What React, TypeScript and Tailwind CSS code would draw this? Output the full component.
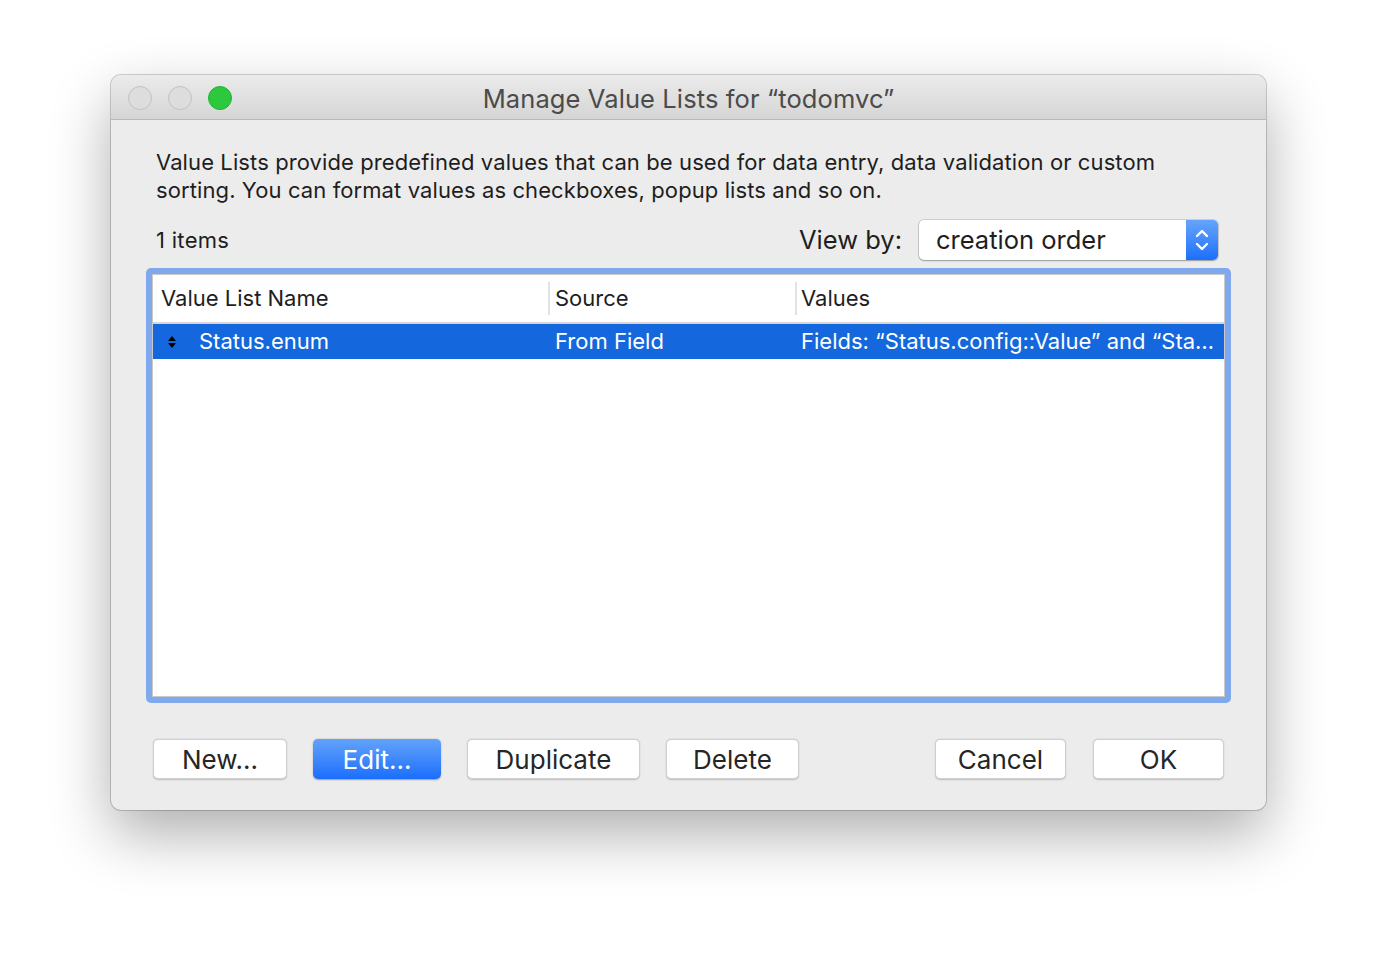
import React from "react";

const font = { fontFamily: "Inter, 'Liberation Sans', sans-serif" };

const Btn = ({ label, w, primary }: { label: string; w: string; primary?: boolean }) => (
  <button
    className={
      primary
        ? `${w} h-[40px] rounded-[5px] bg-gradient-to-b from-[#62a2fa] to-[#1a6efc] text-white text-[26px] shadow-[0_0.5px_1.5px_rgba(0,0,0,0.35)]`
        : `${w} h-[40px] rounded-[5px] bg-white border border-[#cfcfcf] text-[#262626] text-[26px] shadow-[0_0.5px_1.5px_rgba(0,0,0,0.2)]`
    }
  >
    {label}
  </button>
);

export default function App() {
  return (
    <div className="min-h-[958px] w-[1378px] bg-white pt-[75px] pl-[111px]" style={font}>
      <div className="w-[1155px] h-[735px] rounded-[10px] bg-[#ececec] flex flex-col overflow-hidden shadow-[0_0_0_1px_rgba(0,0,0,0.18),0_24px_60px_rgba(0,0,0,0.32)]">
        {/* title bar */}
        <div className="relative h-[45px] shrink-0 flex items-center pt-[2px] bg-gradient-to-b from-[#ebebeb] to-[#d5d5d5] border-b border-[#b8b8b8]">
          <div className="flex gap-[16px] pl-[17px]">
            <span className="w-[24px] h-[24px] rounded-full bg-[#dddddd] border border-[#c2c2c2]" />
            <span className="w-[24px] h-[24px] rounded-full bg-[#dddddd] border border-[#c2c2c2]" />
            <span className="w-[24px] h-[24px] rounded-full bg-[#2cc93f] border border-[#24b034]" />
          </div>
          <div className="absolute inset-0 flex items-center justify-center text-[25.5px] tracking-[0.1px] text-[#4b4b4b] pt-[4px]">
            Manage Value Lists for “todomvc”
          </div>
        </div>

        {/* body */}
        <div className="flex-1 flex flex-col px-[35px] pt-[28px]">
          <p className="pl-[10px] text-[22px] leading-[28px] tracking-[0.1px] text-[#1e1e1e]">
            Value Lists provide predefined values that can be used for data entry, data validation or custom
            <br />
            sorting. You can format values as checkboxes, popup lists and so on.
          </p>

          <div className="mt-[16px] flex items-center h-[40px] pl-[10px] pr-[13px]">
            <span className="text-[22px] tracking-[0.3px] text-[#1e1e1e]">1 items</span>
            <span className="ml-auto text-[25.5px] text-[#1e1e1e]">View by:</span>
            <div className="ml-[17px] w-[299px] h-[40px] flex rounded-[5px] bg-white shadow-[0_0_0_1px_rgba(0,0,0,0.12),0_1px_1.5px_rgba(0,0,0,0.25)] overflow-hidden">
              <span className="flex-1 pl-[17px] flex items-center text-[25.5px] text-[#1e1e1e]">creation order</span>
              <span className="w-[32px] flex items-center justify-center bg-gradient-to-b from-[#66a4fb] to-[#1a6efc]">
                <svg width="16" height="28" viewBox="0 0 16 28" fill="none" stroke="white" strokeWidth="2.4" strokeLinecap="round" strokeLinejoin="round">
                  <path d="M3 10 L8 5 L13 10" />
                  <path d="M3 18 L8 23 L13 18" />
                </svg>
              </span>
            </div>
          </div>

          {/* table */}
          <div className="mt-[8px] h-[435px] rounded-[5px] border-[6px] border-[#7fa9ec] bg-[#7fa9ec]">
            <div className="h-full bg-white border border-[#c9c9c9] flex flex-col">
              <div className="h-[49px] shrink-0 flex items-center text-[22px] text-[#1e1e1e] border-b-2 border-[#d6d6d6]">
                <div className="w-[395px] pl-[8px]">Value List Name</div>
                <div className="w-[247px] h-[33px] flex items-center border-l-2 border-[#e2e2e2] pl-[5px]">Source</div>
                <div className="flex-1 h-[33px] flex items-center border-l-2 border-[#e2e2e2] pl-[4px]">Values</div>
              </div>
              <div className="h-[35px] shrink-0 flex items-center bg-[#1467dc] text-white text-[22px]">
                <div className="w-[395px] flex items-center pl-[15px]">
                  <svg width="8" height="14" viewBox="0 0 8 14">
                    <path d="M0 6 L4 1 L8 6 Z M0 8 L4 13 L8 8 Z" fill="black" />
                  </svg>
                  <span className="ml-[23px]">Status.enum</span>
                </div>
                <div className="w-[247px] pl-[7px]">From Field</div>
                <div className="flex-1 min-w-0 pl-[6px] whitespace-nowrap">
                  Fields: “Status.config::Value” and “Sta…
                </div>
              </div>
            </div>
          </div>

          {/* buttons */}
          <div className="mt-[36px] flex items-center px-[7px]">
            <div className="flex gap-[26px]">
              <Btn label="New..." w="w-[134px]" />
              <Btn label="Edit..." w="w-[128px]" primary />
              <Btn label="Duplicate" w="w-[173px]" />
              <Btn label="Delete" w="w-[133px]" />
            </div>
            <div className="ml-auto flex gap-[27px]">
              <Btn label="Cancel" w="w-[131px]" />
              <Btn label="OK" w="w-[131px]" />
            </div>
          </div>
        </div>
      </div>
    </div>
  );
}
